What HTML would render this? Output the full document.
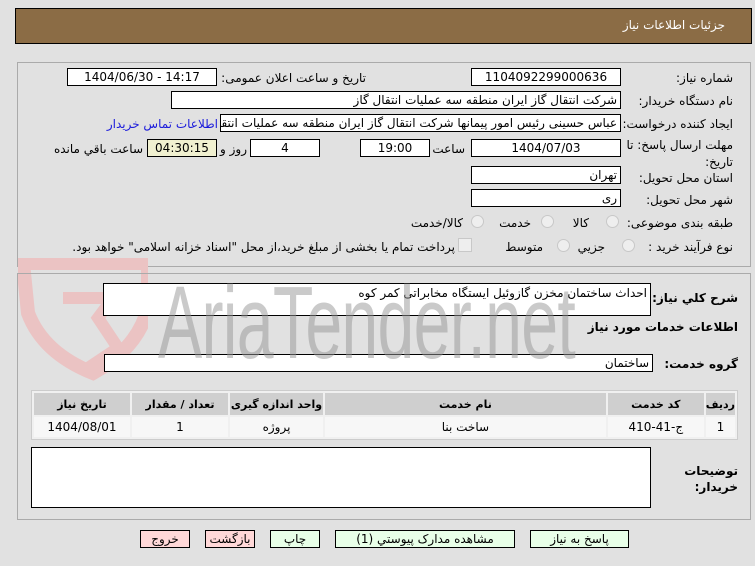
<!DOCTYPE html>
<html><head><meta charset="utf-8"><style>
*{box-sizing:border-box;margin:0;padding:0}
body{width:755px;height:566px;background:#e1e1e1;font-family:"DejaVu Sans","Liberation Sans",sans-serif;font-size:12px;color:#000;position:relative;overflow:hidden}
.a{position:absolute}
.in{position:absolute;background:#fff;border:1px solid #000;height:18px;line-height:16px;font-size:12px;white-space:nowrap;overflow:hidden;padding:0 3px}
.c{text-align:center}.r{text-align:right;direction:rtl}
.lb{position:absolute;direction:rtl;white-space:nowrap;font-size:12px}
.b{font-weight:bold}
.rad{position:absolute;width:13px;height:13px;border-radius:50%;border:1px solid #c8c8c8;background:#eee}
.btn{position:absolute;top:530px;height:18px;border:1px solid #000;text-align:center;line-height:16px;font-size:12px;background:#e8ffe8}
table{border-collapse:separate;border-spacing:2px;position:absolute;left:31px;top:390px;width:707px;height:50px;background:#f0f0f0;border:1px solid #ccc}
th{background:#cfcfcf;font-size:11px;height:22px;font-weight:bold}
td{background:#f7f7f7;text-align:center;font-size:12px}
</style></head><body>
<div class="a" style="left:15px;top:8px;width:737px;height:36px;background:#8b6c45;border:1px solid #000"></div>
<div class="lb" style="right:30px;top:18px;color:#fff;font-size:12px">جزئیات اطلاعات نیاز</div>

<div class="a" style="left:17px;top:62px;width:734px;height:205px;border:1px solid #aaa"></div>
<svg class="a" style="left:18px;top:258px" width="130" height="125" viewBox="0 0 130 125"><path d="M5 5 L130 5 L130 50 Q120 90 75 115 Q25 95 10 55 Z" fill="none" stroke="#ebc3c3" stroke-width="14"/><path d="M45 40 L95 40 L80 60 L100 90 L70 110" fill="none" stroke="#ebc3c3" stroke-width="12"/></svg>

<div class="lb" style="right:22px;top:71px">شماره نیاز:</div>
<div class="in c" style="left:471px;top:68px;width:150px">1104092299000636</div>
<div class="lb" style="right:389px;top:71px">تاریخ و ساعت اعلان عمومی:</div>
<div class="in c" style="left:67px;top:68px;width:150px">1404/06/30 - 14:17</div>

<div class="lb" style="right:22px;top:94px">نام دستگاه خریدار:</div>
<div class="in r" style="left:171px;top:91px;width:450px">شرکت انتقال گاز ایران منطقه سه عملیات انتقال گاز</div>

<div class="lb" style="right:22px;top:117px">ایجاد کننده درخواست:</div>
<div class="in r" style="left:220px;top:114px;width:401px">عباس حسینی رئیس امور پیمانها شرکت انتقال گاز ایران منطقه سه عملیات انتقال گاز</div>
<div class="lb" style="right:537px;top:117px;color:#1a1adb">اطلاعات تماس خریدار</div>

<div class="lb" style="right:22px;top:137px;line-height:17px">مهلت ارسال پاسخ: تا<br>تاریخ:</div>
<div class="in c" style="left:471px;top:139px;width:150px">1404/07/03</div>
<div class="lb" style="right:290px;top:142px">ساعت</div>
<div class="in c" style="left:360px;top:139px;width:70px">19:00</div>
<div class="in c" style="left:250px;top:139px;width:70px">4</div>
<div class="lb" style="right:508px;top:142px">روز و</div>
<div class="in c" style="left:147px;top:139px;width:70px;background:#f0f0d0">04:30:15</div>
<div class="lb" style="right:612px;top:142px">ساعت باقي مانده</div>

<div class="lb" style="right:22px;top:171px">استان محل تحویل:</div>
<div class="in r" style="left:471px;top:166px;width:150px">تهران</div>
<div class="lb" style="right:22px;top:193px">شهر محل تحویل:</div>
<div class="in r" style="left:471px;top:189px;width:150px">ری</div>

<div class="lb" style="right:22px;top:216px">طبقه بندی موضوعی:</div>
<div class="rad" style="left:606px;top:215px"></div><div class="lb" style="right:166px;top:216px">کالا</div>
<div class="rad" style="left:541px;top:215px"></div><div class="lb" style="right:224px;top:216px">خدمت</div>
<div class="rad" style="left:471px;top:215px"></div><div class="lb" style="right:292px;top:216px">کالا/خدمت</div>

<div class="lb" style="right:22px;top:240px">نوع فرآیند خرید :</div>
<div class="rad" style="left:622px;top:239px"></div><div class="lb" style="right:150px;top:240px">جزیي</div>
<div class="rad" style="left:557px;top:239px"></div><div class="lb" style="right:212px;top:240px">متوسط</div>
<div class="a" style="left:458px;top:238px;width:14px;height:14px;border:1px solid #c8c8c8;background:#eee"></div>
<div class="lb" style="right:300px;top:240px">پرداخت تمام یا بخشی از مبلغ خرید،از محل "اسناد خزانه اسلامی" خواهد بود.</div>

<div class="a" style="left:17px;top:273px;width:734px;height:247px;border:1px solid #aaa"></div>
<div class="lb b" style="right:17px;top:291px">شرح کلي نیاز:</div>
<div class="a r" style="left:103px;top:283px;width:548px;height:33px;background:#fff;border:1px solid #000;padding:2px 3px">احداث ساختمان مخزن گازوئیل ایستگاه مخابراتی کمر کوه</div>
<div class="lb b" style="right:17px;top:320px">اطلاعات خدمات مورد نیاز</div>
<div class="lb b" style="right:17px;top:357px">گروه خدمت:</div>
<div class="in r" style="left:104px;top:354px;width:549px">ساختمان</div>

<div class="a" style="left:158px;top:272px;font-size:92px;color:rgba(150,150,150,0.5);transform:scale(0.72,1.12);transform-origin:left top;font-family:'Liberation Sans',sans-serif;letter-spacing:-1px;line-height:1;">AriaTender.net</div>

<table><tr><th style="width:96px">تاریخ نیاز</th><th style="width:96px">تعداد / مقدار</th><th style="width:93px">واحد اندازه گیری</th><th>نام خدمت</th><th style="width:96px">کد خدمت</th><th style="width:26px">ردیف</th></tr>
<tr><td>1404/08/01</td><td>1</td><td>پروژه</td><td>ساخت بنا</td><td>ج-41-410</td><td>1</td></tr></table>

<div class="a" style="left:31px;top:447px;width:620px;height:61px;background:#fff;border:1px solid #000"></div>
<div class="lb b" style="right:17px;top:463px;line-height:16px">توضیحات<br>خریدار:</div>

<div class="btn" style="left:140px;width:50px;background:#ffd8d8">خروج</div>
<div class="btn" style="left:205px;width:50px;background:#ffd8d8">بازگشت</div>
<div class="btn" style="left:270px;width:50px">چاپ</div>
<div class="btn" style="left:335px;width:180px">مشاهده مدارک پیوستي (1)</div>
<div class="btn" style="left:530px;width:99px">پاسخ به نیاز</div>
</body></html>
